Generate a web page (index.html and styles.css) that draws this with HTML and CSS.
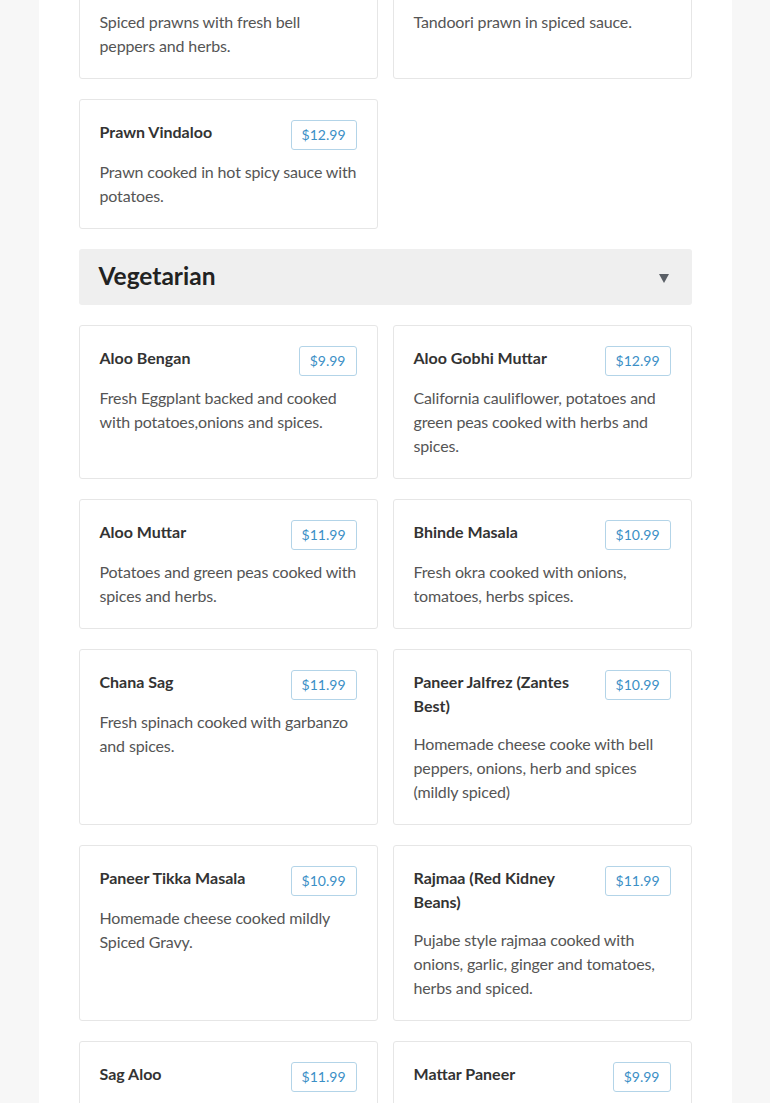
FILE: index.html
```html
<!DOCTYPE html>
<html lang="en">
<head>
<meta charset="utf-8">
<title>Menu</title>
<link rel="stylesheet" href="styles.css">
</head>
<body>
<main class="container">
  <div class="grid grid-first">
    <div class="card">
      <div class="card-head"><h3 class="title">Prawn Jalfrezi</h3><span class="price">$12.99</span></div>
      <p class="desc">Spiced prawns with fresh bell peppers and herbs.</p>
    </div>
    <div class="card">
      <div class="card-head"><h3 class="title">Prawn Tikka Masala</h3><span class="price">$12.99</span></div>
      <p class="desc">Tandoori prawn in spiced sauce.</p>
    </div>
    <div class="card">
      <div class="card-head"><h3 class="title">Prawn Vindaloo</h3><span class="price">$12.99</span></div>
      <p class="desc">Prawn cooked in hot spicy sauce with potatoes.</p>
    </div>
  </div>

  <div class="section-head">
    <h2 class="section-title">Vegetarian</h2>
    <svg class="caret" width="10" height="9" viewBox="0 0 10 9"><polygon points="0,0 10,0 5,9" fill="#5a5f66"/></svg>
  </div>

  <div class="grid">
    <div class="card">
      <div class="card-head"><h3 class="title">Aloo Bengan</h3><span class="price">$9.99</span></div>
      <p class="desc">Fresh Eggplant backed and cooked with potatoes,onions and spices.</p>
    </div>
    <div class="card">
      <div class="card-head"><h3 class="title">Aloo Gobhi Muttar</h3><span class="price">$12.99</span></div>
      <p class="desc">California cauliflower, potatoes and green peas cooked with herbs and spices.</p>
    </div>
    <div class="card">
      <div class="card-head"><h3 class="title">Aloo Muttar</h3><span class="price">$11.99</span></div>
      <p class="desc">Potatoes and green peas cooked with spices and herbs.</p>
    </div>
    <div class="card">
      <div class="card-head"><h3 class="title">Bhinde Masala</h3><span class="price">$10.99</span></div>
      <p class="desc">Fresh okra cooked with onions, tomatoes, herbs spices.</p>
    </div>
    <div class="card">
      <div class="card-head"><h3 class="title">Chana Sag</h3><span class="price">$11.99</span></div>
      <p class="desc">Fresh spinach cooked with garbanzo and spices.</p>
    </div>
    <div class="card">
      <div class="card-head"><h3 class="title">Paneer Jalfrez (Zantes Best)</h3><span class="price">$10.99</span></div>
      <p class="desc">Homemade cheese cooke with bell peppers, onions, herb and spices (mildly spiced)</p>
    </div>
    <div class="card">
      <div class="card-head"><h3 class="title">Paneer Tikka Masala</h3><span class="price">$10.99</span></div>
      <p class="desc">Homemade cheese cooked mildly Spiced Gravy.</p>
    </div>
    <div class="card">
      <div class="card-head"><h3 class="title">Rajmaa (Red Kidney Beans)</h3><span class="price">$11.99</span></div>
      <p class="desc">Pujabe style rajmaa cooked with onions, garlic, ginger and tomatoes, herbs and spiced.</p>
    </div>
    <div class="card">
      <div class="card-head"><h3 class="title">Sag Aloo</h3><span class="price">$11.99</span></div>
      <p class="desc">Fresh spinach cooked with potatoes and spices.</p>
    </div>
    <div class="card">
      <div class="card-head"><h3 class="title">Mattar Paneer</h3><span class="price">$9.99</span></div>
      <p class="desc">Homemade cheese cooked with green peas, herbs and spices.</p>
    </div>
  </div>
</main>
</body>
</html>
```

FILE: styles.css
```css
html, body {
  margin: 0;
  padding: 0;
  background: #f7f7f7;
}

body {
  font-family: Lato, "Open Sans", "Liberation Sans", sans-serif;
  color: #333;
}

.container {
  width: 613px;
  margin: 0 auto;
  padding: 0 40px 40px;
  background: #fff;
}

.grid {
  display: grid;
  grid-template-columns: 1fr 1fr;
  gap: 20px 15px;
}

.grid-first {
  margin-top: -51px;
}

.card {
  border: 1px solid #e6e6e6;
  border-radius: 3px;
  padding: 20px;
  background: #fff;
}

.card-head {
  display: flex;
  justify-content: space-between;
  align-items: flex-start;
  gap: 16px;
  margin-bottom: 10px;
}

.title {
  margin: 0;
  padding-bottom: 4px;
  font-size: 16px;
  line-height: 24px;
  font-weight: 700;
  color: #333;
}

.price {
  flex: none;
  border: 1px solid #b3d4e8;
  border-radius: 3px;
  padding: 0 10px;
  font-size: 14px;
  line-height: 28px;
  color: #3b8fc6;
}

.desc {
  margin: 0;
  font-size: 16px;
  line-height: 24px;
  letter-spacing: -0.14px;
  color: #555;
}

.section-head {
  display: flex;
  justify-content: space-between;
  align-items: center;
  height: 56px;
  margin: 20px 0;
  padding: 0 23px 0 20px;
  background: #efefef;
  border-radius: 3px;
}

.section-title {
  margin: 0;
  padding-bottom: 3px;
  font-size: 24.5px;
  font-weight: 700;
  color: #222;
}

.caret {
  display: block;
  margin-top: 2px;
}
```
